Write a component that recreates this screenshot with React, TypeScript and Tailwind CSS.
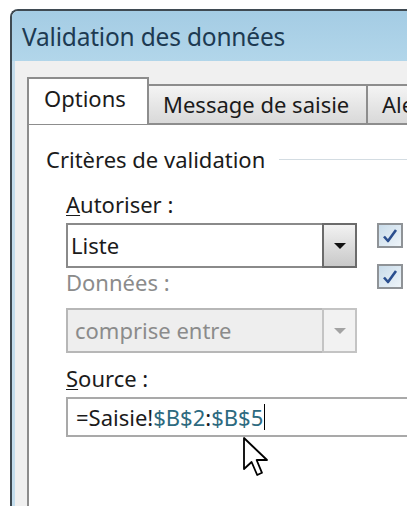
import React from 'react';

const font = { fontFamily: '"Noto Sans", "Open Sans", sans-serif' };

function Checkbox() {
  return (
    <div className="w-[26px] h-[25px] border-2 border-[#8f9397] bg-gradient-to-br from-[#c9dcea] to-[#eef4f9] flex items-center justify-center">
      <svg width="16" height="16" viewBox="0 0 16 16">
        <path d="M2 8.5 L6 13 L14 2" fill="none" stroke="#2b4f8f" strokeWidth="2.6" strokeLinejoin="round" />
      </svg>
    </div>
  );
}

function Arrow({ disabled }: { disabled?: boolean }) {
  return (
    <svg width="14" height="8" viewBox="0 0 14 8">
      <path d="M1 1 H13 L7 7 Z" fill={disabled ? '#a3a3a3' : '#111'} />
    </svg>
  );
}

export default function App() {
  return (
    <div className="w-[407px] h-[506px] bg-white overflow-hidden relative pt-[9px] pl-[10px]" style={font}>
      <div className="h-full flex flex-col rounded-tl-[8px] border-l-2 border-t-2 border-[#3f4a52] overflow-hidden">
        {/* title bar */}
        <div className="h-[50px] shrink-0 bg-gradient-to-b from-[#a4cce4] to-[#b2d6ea] flex items-center pl-[10px] pt-[2px]">
          <span className="text-[24.5px] text-[#1d3a52] tracking-[-0.2px] whitespace-nowrap">Validation des données</span>
        </div>

        <div className="flex-1 flex flex-col bg-[#f0f0f0] border-l-[3px] border-[#c4dded] pl-[12px] pt-[16px]">
          {/* tabs */}
          <div className="flex items-end h-[46px] shrink-0 relative z-10 text-[22px] text-[#1b1b1b] whitespace-nowrap">
            <div className="w-[122px] h-[47px] shrink-0 -mb-px bg-white border-l-2 border-t-2 border-r-2 border-[#8d8d8d] flex items-center pl-[15px] pb-[6px]">
              Options
            </div>
            <div className="w-[219px] h-[39px] shrink-0 bg-gradient-to-b from-[#f4f4f4] to-[#d9d9d9] border-t-2 border-r-2 border-[#8d8d8d] flex items-center pl-[14px]">
              Message de saisie
            </div>
            <div className="flex-1 h-[39px] bg-gradient-to-b from-[#f4f4f4] to-[#d9d9d9] border-t-2 border-[#8d8d8d] flex items-center pl-[14px]">
              Alerte d'erreur
            </div>
          </div>

          {/* options panel */}
          <div className="flex-1 bg-white border-l-2 border-t-2 border-[#8d8d8d] pl-[17px] pt-[20px] text-[22px] text-[#1b1b1b] whitespace-nowrap">
            <div className="flex items-center h-[28px]">
              <span>Critères de validation</span>
              <div className="flex-1 h-px bg-[#d3dce2] ml-[14px]" />
            </div>

            <div className="pl-[20px]">
              <div className="flex mt-[18px]">
                <div className="w-[291px] shrink-0 flex flex-col">
                  <div className="h-[26px] flex items-center">
                    <span><span className="underline underline-offset-2 decoration-1">A</span>utoriser :</span>
                  </div>
                  <div className="mt-[6px] h-[45px] border-2 border-[#8a8a8a] bg-white flex">
                    <div className="flex-1 flex items-center pl-[3px]">Liste</div>
                    <div className="w-[35px] -my-[2px] -mr-[2px] border-2 border-[#6b6b6b] bg-gradient-to-b from-[#f2f2f2] to-[#c9c9c9] flex items-center justify-center">
                      <Arrow />
                    </div>
                  </div>
                  <div className="mt-[1px] h-[26px] flex items-center text-[#8b8b8b]">Données :</div>
                  <div className="mt-[13px] h-[45px] border-2 border-[#b7b7b7] bg-[#eeeeee] flex">
                    <div className="flex-1 flex items-center pl-[7px] text-[#8b8b8b]">comprise entre</div>
                    <div className="w-[35px] -my-[2px] -mr-[2px] border-2 border-[#c4c4c4] bg-[#f2f2f2] flex items-center justify-center">
                      <Arrow disabled />
                    </div>
                  </div>
                </div>
                <div className="ml-[20px] pt-[32px] flex flex-col gap-[16px]">
                  <Checkbox />
                  <Checkbox />
                </div>
              </div>

              <div className="mt-[12px] h-[26px] flex items-center">
                <span><span className="underline underline-offset-2 decoration-1">S</span>ource :</span>
              </div>
              <div className="mt-[6px] h-[40px] border-2 border-r-0 border-[#a9a9a9] bg-white flex items-center pl-[8px]">
                <span>=Saisie!</span>
                <span className="text-[#2d6a80]">$B$2</span>
                <span>:</span>
                <span className="text-[#2d6a80]">$B$5</span>
                <span className="w-px h-[26px] bg-black ml-[1px]" />
              </div>
            </div>
          </div>
        </div>
      </div>

      {/* mouse pointer over the source field */}
      <svg className="absolute left-[242px] top-[436px]" width="28" height="44" viewBox="0 0 14 22">
        <path
          d="M1 1 L1 16.5 L4.8 13 L7.6 19.5 L10 18.4 L7.3 12 L12.5 12 Z"
          fill="#fff"
          stroke="#000"
          strokeWidth="0.9"
          strokeLinejoin="round"
        />
      </svg>
    </div>
  );
}
